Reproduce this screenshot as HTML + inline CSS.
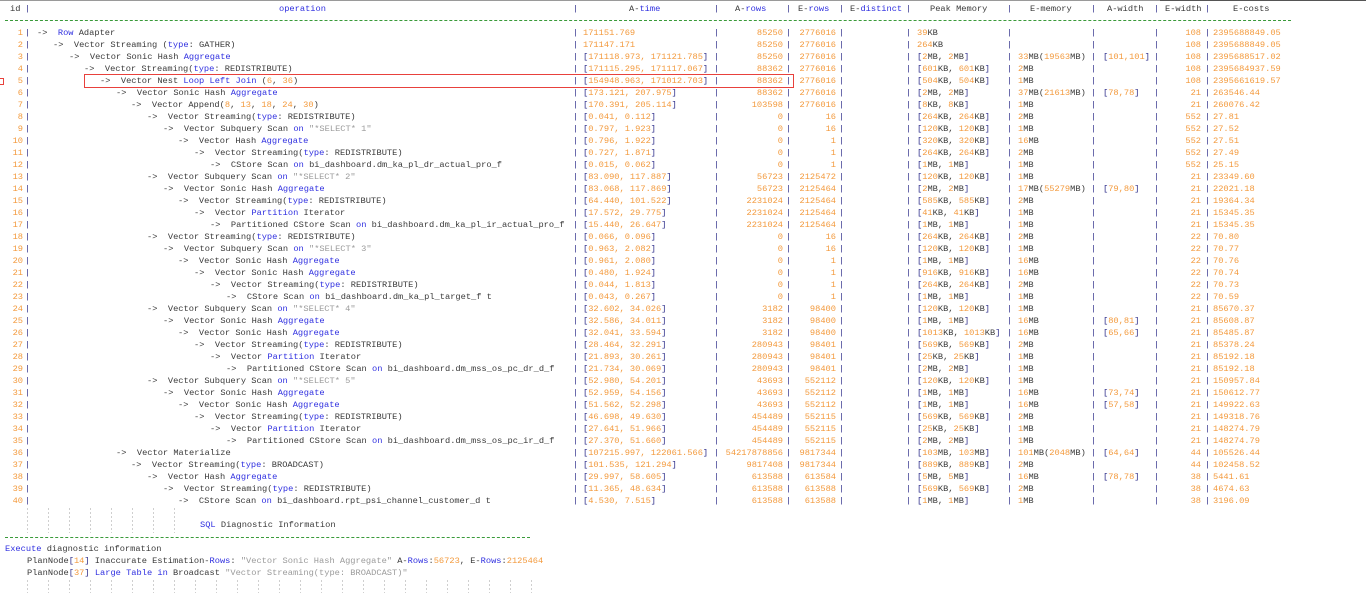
<!DOCTYPE html>
<html><head><meta charset="utf-8">
<style>
html,body{margin:0;padding:0;background:#fff;width:1366px;height:593px;overflow:hidden}
body{font-family:"Liberation Mono","DejaVu Sans Mono",monospace;font-size:8.7px;color:#3a3a3a;position:relative}
.r{position:absolute;left:0;width:1366px;height:12px;line-height:12px;white-space:pre}
.r span{white-space:pre}
.c{position:absolute;top:0}
.id{left:0;width:23px;text-align:right;color:#f39a3d}
.at{left:583px}
.ar{left:718px;width:65px;text-align:right}
.er{left:790px;width:46px;text-align:right}
.pm{left:917px}
.em{left:1018px}
.aw{left:1103px}
.ew{left:1160px;width:41px;text-align:right}
.ec{left:1213px}
.n{color:#f39a3d}
.k{color:#2f2fe0}
.s{color:#9b9b9b}
.b{color:#2e2e8a}
.bars{position:absolute;top:3px;margin:0;font:inherit;line-height:12px;color:#2e2e8a}
.h{position:absolute;top:3px;height:12px;line-height:12px;white-space:pre}
</style></head><body>
<div style="position:absolute;left:0;top:0;width:1366px;height:1px;background:#9a9a9a"></div>
<div style="position:absolute;left:1160px;top:0;width:206px;height:1px;background:#555"></div>

<!-- header -->
<div class="h" style="left:10px">id</div>
<div class="h k" style="left:279px">operation</div>
<div class="h" style="left:629px">A-<span class="k">time</span></div>
<div class="h" style="left:735px">A-<span class="k">rows</span></div>
<div class="h" style="left:798px">E-<span class="k">rows</span></div>
<div class="h" style="left:850px">E-<span class="k">distinct</span></div>
<div class="h" style="left:930px">Peak Memory</div>
<div class="h" style="left:1030px">E-memory</div>
<div class="h" style="left:1107px">A-width</div>
<div class="h" style="left:1165px">E-width</div>
<div class="h" style="left:1233px">E-costs</div>
<div style="position:absolute;left:5px;top:20px;width:1286px;height:0;border-top:1px dashed #3a9a3a"></div>

<!-- bars -->
<pre class="bars" style="left:25px">|

|
|
|
|
|
|
|
|
|
|
|
|
|
|
|
|
|
|
|
|
|
|
|
|
|
|
|
|
|
|
|
|
|
|
|
|
|
|
|
|</pre>
<pre class="bars" style="left:573px">|

|
|
|
|
|
|
|
|
|
|
|
|
|
|
|
|
|
|
|
|
|
|
|
|
|
|
|
|
|
|
|
|
|
|
|
|
|
|
|
|</pre>
<pre class="bars" style="left:714px">|

|
|
|
|
|
|
|
|
|
|
|
|
|
|
|
|
|
|
|
|
|
|
|
|
|
|
|
|
|
|
|
|
|
|
|
|
|
|
|
|</pre>
<pre class="bars" style="left:786px">|

|
|
|
|
|
|
|
|
|
|
|
|
|
|
|
|
|
|
|
|
|
|
|
|
|
|
|
|
|
|
|
|
|
|
|
|
|
|
|
|</pre>
<pre class="bars" style="left:839px">|

|
|
|
|
|
|
|
|
|
|
|
|
|
|
|
|
|
|
|
|
|
|
|
|
|
|
|
|
|
|
|
|
|
|
|
|
|
|
|
|</pre>
<pre class="bars" style="left:906px">|

|
|
|
|
|
|
|
|
|
|
|
|
|
|
|
|
|
|
|
|
|
|
|
|
|
|
|
|
|
|
|
|
|
|
|
|
|
|
|
|</pre>
<pre class="bars" style="left:1007px">|

|
|
|
|
|
|
|
|
|
|
|
|
|
|
|
|
|
|
|
|
|
|
|
|
|
|
|
|
|
|
|
|
|
|
|
|
|
|
|
|</pre>
<pre class="bars" style="left:1091px">|

|
|
|
|
|
|
|
|
|
|
|
|
|
|
|
|
|
|
|
|
|
|
|
|
|
|
|
|
|
|
|
|
|
|
|
|
|
|
|
|</pre>
<pre class="bars" style="left:1154px">|

|
|
|
|
|
|
|
|
|
|
|
|
|
|
|
|
|
|
|
|
|
|
|
|
|
|
|
|
|
|
|
|
|
|
|
|
|
|
|
|</pre>
<pre class="bars" style="left:1205px">|

|
|
|
|
|
|
|
|
|
|
|
|
|
|
|
|
|
|
|
|
|
|
|
|
|
|
|
|
|
|
|
|
|
|
|
|
|
|
|
|</pre>

<!-- rows -->
<div class="r" style="top:27px"><span class="c id">1</span><span class="c" style="left:37px">-&gt;  <span class="k">Row</span> Adapter</span><span class="c at n">171151.769</span><span class="c ar n">85250</span><span class="c er n">2776016</span><span class="c pm"><span class="n">39</span>KB</span><span class="c ew n">108</span><span class="c ec n">2395688849.05</span></div>
<div class="r" style="top:39px"><span class="c id">2</span><span class="c" style="left:53px">-&gt;  Vector Streaming (<span class="k">type</span>: GATHER)</span><span class="c at n">171147.171</span><span class="c ar n">85250</span><span class="c er n">2776016</span><span class="c pm"><span class="n">264</span>KB</span><span class="c ew n">108</span><span class="c ec n">2395688849.05</span></div>
<div class="r" style="top:51px"><span class="c id">3</span><span class="c" style="left:69px">-&gt;  Vector Sonic Hash <span class="k">Aggregate</span></span><span class="c at"><span class="b">[</span><span class="n">171118.973, 171121.785</span><span class="b">]</span></span><span class="c ar n">85250</span><span class="c er n">2776016</span><span class="c pm"><span class="b">[</span><span class="n">2</span>MB, <span class="n">2</span>MB<span class="b">]</span></span><span class="c em"><span class="n">33</span>MB(<span class="n">19563</span>MB)</span><span class="c aw b">[<span class="n">101,101</span>]</span><span class="c ew n">108</span><span class="c ec n">2395688517.02</span></div>
<div class="r" style="top:63px"><span class="c id">4</span><span class="c" style="left:84px">-&gt;  Vector Streaming(<span class="k">type</span>: REDISTRIBUTE)</span><span class="c at"><span class="b">[</span><span class="n">171115.295, 171117.067</span><span class="b">]</span></span><span class="c ar n">88362</span><span class="c er n">2776016</span><span class="c pm"><span class="b">[</span><span class="n">601</span>KB, <span class="n">601</span>KB<span class="b">]</span></span><span class="c em"><span class="n">2</span>MB</span><span class="c ew n">108</span><span class="c ec n">2395684937.59</span></div>
<div class="r" style="top:75px"><span class="c id">5</span><span class="c" style="left:100px">-&gt;  Vector Nest <span class="k">Loop Left Join</span> (<span class="n">6</span>, <span class="n">36</span>)</span><span class="c at"><span class="b">[</span><span class="n">154948.963, 171012.703</span><span class="b">]</span></span><span class="c ar n">88362</span><span class="c er n">2776016</span><span class="c pm"><span class="b">[</span><span class="n">504</span>KB, <span class="n">504</span>KB<span class="b">]</span></span><span class="c em"><span class="n">1</span>MB</span><span class="c ew n">108</span><span class="c ec n">2395661619.57</span></div>
<div class="r" style="top:87px"><span class="c id">6</span><span class="c" style="left:116px">-&gt;  Vector Sonic Hash <span class="k">Aggregate</span></span><span class="c at"><span class="b">[</span><span class="n">173.121, 207.975</span><span class="b">]</span></span><span class="c ar n">88362</span><span class="c er n">2776016</span><span class="c pm"><span class="b">[</span><span class="n">2</span>MB, <span class="n">2</span>MB<span class="b">]</span></span><span class="c em"><span class="n">37</span>MB(<span class="n">21613</span>MB)</span><span class="c aw b">[<span class="n">78,78</span>]</span><span class="c ew n">21</span><span class="c ec n">263546.44</span></div>
<div class="r" style="top:99px"><span class="c id">7</span><span class="c" style="left:131px">-&gt;  Vector Append(<span class="n">8</span>, <span class="n">13</span>, <span class="n">18</span>, <span class="n">24</span>, <span class="n">30</span>)</span><span class="c at"><span class="b">[</span><span class="n">170.391, 205.114</span><span class="b">]</span></span><span class="c ar n">103598</span><span class="c er n">2776016</span><span class="c pm"><span class="b">[</span><span class="n">8</span>KB, <span class="n">8</span>KB<span class="b">]</span></span><span class="c em"><span class="n">1</span>MB</span><span class="c ew n">21</span><span class="c ec n">260076.42</span></div>
<div class="r" style="top:111px"><span class="c id">8</span><span class="c" style="left:147px">-&gt;  Vector Streaming(<span class="k">type</span>: REDISTRIBUTE)</span><span class="c at"><span class="b">[</span><span class="n">0.041, 0.112</span><span class="b">]</span></span><span class="c ar n">0</span><span class="c er n">16</span><span class="c pm"><span class="b">[</span><span class="n">264</span>KB, <span class="n">264</span>KB<span class="b">]</span></span><span class="c em"><span class="n">2</span>MB</span><span class="c ew n">552</span><span class="c ec n">27.81</span></div>
<div class="r" style="top:123px"><span class="c id">9</span><span class="c" style="left:163px">-&gt;  Vector Subquery Scan <span class="k">on</span> <span class="s">"*SELECT* 1"</span></span><span class="c at"><span class="b">[</span><span class="n">0.797, 1.923</span><span class="b">]</span></span><span class="c ar n">0</span><span class="c er n">16</span><span class="c pm"><span class="b">[</span><span class="n">120</span>KB, <span class="n">120</span>KB<span class="b">]</span></span><span class="c em"><span class="n">1</span>MB</span><span class="c ew n">552</span><span class="c ec n">27.52</span></div>
<div class="r" style="top:135px"><span class="c id">10</span><span class="c" style="left:178px">-&gt;  Vector Hash <span class="k">Aggregate</span></span><span class="c at"><span class="b">[</span><span class="n">0.796, 1.922</span><span class="b">]</span></span><span class="c ar n">0</span><span class="c er n">1</span><span class="c pm"><span class="b">[</span><span class="n">320</span>KB, <span class="n">320</span>KB<span class="b">]</span></span><span class="c em"><span class="n">16</span>MB</span><span class="c ew n">552</span><span class="c ec n">27.51</span></div>
<div class="r" style="top:147px"><span class="c id">11</span><span class="c" style="left:194px">-&gt;  Vector Streaming(<span class="k">type</span>: REDISTRIBUTE)</span><span class="c at"><span class="b">[</span><span class="n">0.727, 1.871</span><span class="b">]</span></span><span class="c ar n">0</span><span class="c er n">1</span><span class="c pm"><span class="b">[</span><span class="n">264</span>KB, <span class="n">264</span>KB<span class="b">]</span></span><span class="c em"><span class="n">2</span>MB</span><span class="c ew n">552</span><span class="c ec n">27.49</span></div>
<div class="r" style="top:159px"><span class="c id">12</span><span class="c" style="left:210px">-&gt;  CStore Scan <span class="k">on</span> bi_dashboard.dm_ka_pl_dr_actual_pro_f</span><span class="c at"><span class="b">[</span><span class="n">0.015, 0.062</span><span class="b">]</span></span><span class="c ar n">0</span><span class="c er n">1</span><span class="c pm"><span class="b">[</span><span class="n">1</span>MB, <span class="n">1</span>MB<span class="b">]</span></span><span class="c em"><span class="n">1</span>MB</span><span class="c ew n">552</span><span class="c ec n">25.15</span></div>
<div class="r" style="top:171px"><span class="c id">13</span><span class="c" style="left:147px">-&gt;  Vector Subquery Scan <span class="k">on</span> <span class="s">"*SELECT* 2"</span></span><span class="c at"><span class="b">[</span><span class="n">83.090, 117.887</span><span class="b">]</span></span><span class="c ar n">56723</span><span class="c er n">2125472</span><span class="c pm"><span class="b">[</span><span class="n">120</span>KB, <span class="n">120</span>KB<span class="b">]</span></span><span class="c em"><span class="n">1</span>MB</span><span class="c ew n">21</span><span class="c ec n">23349.60</span></div>
<div class="r" style="top:183px"><span class="c id">14</span><span class="c" style="left:163px">-&gt;  Vector Sonic Hash <span class="k">Aggregate</span></span><span class="c at"><span class="b">[</span><span class="n">83.068, 117.869</span><span class="b">]</span></span><span class="c ar n">56723</span><span class="c er n">2125464</span><span class="c pm"><span class="b">[</span><span class="n">2</span>MB, <span class="n">2</span>MB<span class="b">]</span></span><span class="c em"><span class="n">17</span>MB(<span class="n">55279</span>MB)</span><span class="c aw b">[<span class="n">79,80</span>]</span><span class="c ew n">21</span><span class="c ec n">22021.18</span></div>
<div class="r" style="top:195px"><span class="c id">15</span><span class="c" style="left:178px">-&gt;  Vector Streaming(<span class="k">type</span>: REDISTRIBUTE)</span><span class="c at"><span class="b">[</span><span class="n">64.440, 101.522</span><span class="b">]</span></span><span class="c ar n">2231024</span><span class="c er n">2125464</span><span class="c pm"><span class="b">[</span><span class="n">585</span>KB, <span class="n">585</span>KB<span class="b">]</span></span><span class="c em"><span class="n">2</span>MB</span><span class="c ew n">21</span><span class="c ec n">19364.34</span></div>
<div class="r" style="top:207px"><span class="c id">16</span><span class="c" style="left:194px">-&gt;  Vector <span class="k">Partition</span> Iterator</span><span class="c at"><span class="b">[</span><span class="n">17.572, 29.775</span><span class="b">]</span></span><span class="c ar n">2231024</span><span class="c er n">2125464</span><span class="c pm"><span class="b">[</span><span class="n">41</span>KB, <span class="n">41</span>KB<span class="b">]</span></span><span class="c em"><span class="n">1</span>MB</span><span class="c ew n">21</span><span class="c ec n">15345.35</span></div>
<div class="r" style="top:219px"><span class="c id">17</span><span class="c" style="left:210px">-&gt;  Partitioned CStore Scan <span class="k">on</span> bi_dashboard.dm_ka_pl_ir_actual_pro_f</span><span class="c at"><span class="b">[</span><span class="n">15.440, 26.647</span><span class="b">]</span></span><span class="c ar n">2231024</span><span class="c er n">2125464</span><span class="c pm"><span class="b">[</span><span class="n">1</span>MB, <span class="n">1</span>MB<span class="b">]</span></span><span class="c em"><span class="n">1</span>MB</span><span class="c ew n">21</span><span class="c ec n">15345.35</span></div>
<div class="r" style="top:231px"><span class="c id">18</span><span class="c" style="left:147px">-&gt;  Vector Streaming(<span class="k">type</span>: REDISTRIBUTE)</span><span class="c at"><span class="b">[</span><span class="n">0.066, 0.096</span><span class="b">]</span></span><span class="c ar n">0</span><span class="c er n">16</span><span class="c pm"><span class="b">[</span><span class="n">264</span>KB, <span class="n">264</span>KB<span class="b">]</span></span><span class="c em"><span class="n">2</span>MB</span><span class="c ew n">22</span><span class="c ec n">70.80</span></div>
<div class="r" style="top:243px"><span class="c id">19</span><span class="c" style="left:163px">-&gt;  Vector Subquery Scan <span class="k">on</span> <span class="s">"*SELECT* 3"</span></span><span class="c at"><span class="b">[</span><span class="n">0.963, 2.082</span><span class="b">]</span></span><span class="c ar n">0</span><span class="c er n">16</span><span class="c pm"><span class="b">[</span><span class="n">120</span>KB, <span class="n">120</span>KB<span class="b">]</span></span><span class="c em"><span class="n">1</span>MB</span><span class="c ew n">22</span><span class="c ec n">70.77</span></div>
<div class="r" style="top:255px"><span class="c id">20</span><span class="c" style="left:178px">-&gt;  Vector Sonic Hash <span class="k">Aggregate</span></span><span class="c at"><span class="b">[</span><span class="n">0.961, 2.080</span><span class="b">]</span></span><span class="c ar n">0</span><span class="c er n">1</span><span class="c pm"><span class="b">[</span><span class="n">1</span>MB, <span class="n">1</span>MB<span class="b">]</span></span><span class="c em"><span class="n">16</span>MB</span><span class="c ew n">22</span><span class="c ec n">70.76</span></div>
<div class="r" style="top:267px"><span class="c id">21</span><span class="c" style="left:194px">-&gt;  Vector Sonic Hash <span class="k">Aggregate</span></span><span class="c at"><span class="b">[</span><span class="n">0.480, 1.924</span><span class="b">]</span></span><span class="c ar n">0</span><span class="c er n">1</span><span class="c pm"><span class="b">[</span><span class="n">916</span>KB, <span class="n">916</span>KB<span class="b">]</span></span><span class="c em"><span class="n">16</span>MB</span><span class="c ew n">22</span><span class="c ec n">70.74</span></div>
<div class="r" style="top:279px"><span class="c id">22</span><span class="c" style="left:210px">-&gt;  Vector Streaming(<span class="k">type</span>: REDISTRIBUTE)</span><span class="c at"><span class="b">[</span><span class="n">0.044, 1.813</span><span class="b">]</span></span><span class="c ar n">0</span><span class="c er n">1</span><span class="c pm"><span class="b">[</span><span class="n">264</span>KB, <span class="n">264</span>KB<span class="b">]</span></span><span class="c em"><span class="n">2</span>MB</span><span class="c ew n">22</span><span class="c ec n">70.73</span></div>
<div class="r" style="top:291px"><span class="c id">23</span><span class="c" style="left:226px">-&gt;  CStore Scan <span class="k">on</span> bi_dashboard.dm_ka_pl_target_f t</span><span class="c at"><span class="b">[</span><span class="n">0.043, 0.267</span><span class="b">]</span></span><span class="c ar n">0</span><span class="c er n">1</span><span class="c pm"><span class="b">[</span><span class="n">1</span>MB, <span class="n">1</span>MB<span class="b">]</span></span><span class="c em"><span class="n">1</span>MB</span><span class="c ew n">22</span><span class="c ec n">70.59</span></div>
<div class="r" style="top:303px"><span class="c id">24</span><span class="c" style="left:147px">-&gt;  Vector Subquery Scan <span class="k">on</span> <span class="s">"*SELECT* 4"</span></span><span class="c at"><span class="b">[</span><span class="n">32.602, 34.026</span><span class="b">]</span></span><span class="c ar n">3182</span><span class="c er n">98400</span><span class="c pm"><span class="b">[</span><span class="n">120</span>KB, <span class="n">120</span>KB<span class="b">]</span></span><span class="c em"><span class="n">1</span>MB</span><span class="c ew n">21</span><span class="c ec n">85670.37</span></div>
<div class="r" style="top:315px"><span class="c id">25</span><span class="c" style="left:163px">-&gt;  Vector Sonic Hash <span class="k">Aggregate</span></span><span class="c at"><span class="b">[</span><span class="n">32.586, 34.011</span><span class="b">]</span></span><span class="c ar n">3182</span><span class="c er n">98400</span><span class="c pm"><span class="b">[</span><span class="n">1</span>MB, <span class="n">1</span>MB<span class="b">]</span></span><span class="c em"><span class="n">16</span>MB</span><span class="c aw b">[<span class="n">80,81</span>]</span><span class="c ew n">21</span><span class="c ec n">85608.87</span></div>
<div class="r" style="top:327px"><span class="c id">26</span><span class="c" style="left:178px">-&gt;  Vector Sonic Hash <span class="k">Aggregate</span></span><span class="c at"><span class="b">[</span><span class="n">32.041, 33.594</span><span class="b">]</span></span><span class="c ar n">3182</span><span class="c er n">98400</span><span class="c pm"><span class="b">[</span><span class="n">1013</span>KB, <span class="n">1013</span>KB<span class="b">]</span></span><span class="c em"><span class="n">16</span>MB</span><span class="c aw b">[<span class="n">65,66</span>]</span><span class="c ew n">21</span><span class="c ec n">85485.87</span></div>
<div class="r" style="top:339px"><span class="c id">27</span><span class="c" style="left:194px">-&gt;  Vector Streaming(<span class="k">type</span>: REDISTRIBUTE)</span><span class="c at"><span class="b">[</span><span class="n">28.464, 32.291</span><span class="b">]</span></span><span class="c ar n">280943</span><span class="c er n">98401</span><span class="c pm"><span class="b">[</span><span class="n">569</span>KB, <span class="n">569</span>KB<span class="b">]</span></span><span class="c em"><span class="n">2</span>MB</span><span class="c ew n">21</span><span class="c ec n">85378.24</span></div>
<div class="r" style="top:351px"><span class="c id">28</span><span class="c" style="left:210px">-&gt;  Vector <span class="k">Partition</span> Iterator</span><span class="c at"><span class="b">[</span><span class="n">21.893, 30.261</span><span class="b">]</span></span><span class="c ar n">280943</span><span class="c er n">98401</span><span class="c pm"><span class="b">[</span><span class="n">25</span>KB, <span class="n">25</span>KB<span class="b">]</span></span><span class="c em"><span class="n">1</span>MB</span><span class="c ew n">21</span><span class="c ec n">85192.18</span></div>
<div class="r" style="top:363px"><span class="c id">29</span><span class="c" style="left:226px">-&gt;  Partitioned CStore Scan <span class="k">on</span> bi_dashboard.dm_mss_os_pc_dr_d_f</span><span class="c at"><span class="b">[</span><span class="n">21.734, 30.069</span><span class="b">]</span></span><span class="c ar n">280943</span><span class="c er n">98401</span><span class="c pm"><span class="b">[</span><span class="n">2</span>MB, <span class="n">2</span>MB<span class="b">]</span></span><span class="c em"><span class="n">1</span>MB</span><span class="c ew n">21</span><span class="c ec n">85192.18</span></div>
<div class="r" style="top:375px"><span class="c id">30</span><span class="c" style="left:147px">-&gt;  Vector Subquery Scan <span class="k">on</span> <span class="s">"*SELECT* 5"</span></span><span class="c at"><span class="b">[</span><span class="n">52.980, 54.201</span><span class="b">]</span></span><span class="c ar n">43693</span><span class="c er n">552112</span><span class="c pm"><span class="b">[</span><span class="n">120</span>KB, <span class="n">120</span>KB<span class="b">]</span></span><span class="c em"><span class="n">1</span>MB</span><span class="c ew n">21</span><span class="c ec n">150957.84</span></div>
<div class="r" style="top:387px"><span class="c id">31</span><span class="c" style="left:163px">-&gt;  Vector Sonic Hash <span class="k">Aggregate</span></span><span class="c at"><span class="b">[</span><span class="n">52.959, 54.156</span><span class="b">]</span></span><span class="c ar n">43693</span><span class="c er n">552112</span><span class="c pm"><span class="b">[</span><span class="n">1</span>MB, <span class="n">1</span>MB<span class="b">]</span></span><span class="c em"><span class="n">16</span>MB</span><span class="c aw b">[<span class="n">73,74</span>]</span><span class="c ew n">21</span><span class="c ec n">150612.77</span></div>
<div class="r" style="top:399px"><span class="c id">32</span><span class="c" style="left:178px">-&gt;  Vector Sonic Hash <span class="k">Aggregate</span></span><span class="c at"><span class="b">[</span><span class="n">51.562, 52.298</span><span class="b">]</span></span><span class="c ar n">43693</span><span class="c er n">552112</span><span class="c pm"><span class="b">[</span><span class="n">1</span>MB, <span class="n">1</span>MB<span class="b">]</span></span><span class="c em"><span class="n">16</span>MB</span><span class="c aw b">[<span class="n">57,58</span>]</span><span class="c ew n">21</span><span class="c ec n">149922.63</span></div>
<div class="r" style="top:411px"><span class="c id">33</span><span class="c" style="left:194px">-&gt;  Vector Streaming(<span class="k">type</span>: REDISTRIBUTE)</span><span class="c at"><span class="b">[</span><span class="n">46.698, 49.630</span><span class="b">]</span></span><span class="c ar n">454489</span><span class="c er n">552115</span><span class="c pm"><span class="b">[</span><span class="n">569</span>KB, <span class="n">569</span>KB<span class="b">]</span></span><span class="c em"><span class="n">2</span>MB</span><span class="c ew n">21</span><span class="c ec n">149318.76</span></div>
<div class="r" style="top:423px"><span class="c id">34</span><span class="c" style="left:210px">-&gt;  Vector <span class="k">Partition</span> Iterator</span><span class="c at"><span class="b">[</span><span class="n">27.641, 51.966</span><span class="b">]</span></span><span class="c ar n">454489</span><span class="c er n">552115</span><span class="c pm"><span class="b">[</span><span class="n">25</span>KB, <span class="n">25</span>KB<span class="b">]</span></span><span class="c em"><span class="n">1</span>MB</span><span class="c ew n">21</span><span class="c ec n">148274.79</span></div>
<div class="r" style="top:435px"><span class="c id">35</span><span class="c" style="left:226px">-&gt;  Partitioned CStore Scan <span class="k">on</span> bi_dashboard.dm_mss_os_pc_ir_d_f</span><span class="c at"><span class="b">[</span><span class="n">27.370, 51.660</span><span class="b">]</span></span><span class="c ar n">454489</span><span class="c er n">552115</span><span class="c pm"><span class="b">[</span><span class="n">2</span>MB, <span class="n">2</span>MB<span class="b">]</span></span><span class="c em"><span class="n">1</span>MB</span><span class="c ew n">21</span><span class="c ec n">148274.79</span></div>
<div class="r" style="top:447px"><span class="c id">36</span><span class="c" style="left:116px">-&gt;  Vector Materialize</span><span class="c at"><span class="b">[</span><span class="n">107215.997, 122061.566</span><span class="b">]</span></span><span class="c ar n">54217878856</span><span class="c er n">9817344</span><span class="c pm"><span class="b">[</span><span class="n">103</span>MB, <span class="n">103</span>MB<span class="b">]</span></span><span class="c em"><span class="n">101</span>MB(<span class="n">2048</span>MB)</span><span class="c aw b">[<span class="n">64,64</span>]</span><span class="c ew n">44</span><span class="c ec n">105526.44</span></div>
<div class="r" style="top:459px"><span class="c id">37</span><span class="c" style="left:131px">-&gt;  Vector Streaming(<span class="k">type</span>: BROADCAST)</span><span class="c at"><span class="b">[</span><span class="n">101.535, 121.294</span><span class="b">]</span></span><span class="c ar n">9817408</span><span class="c er n">9817344</span><span class="c pm"><span class="b">[</span><span class="n">889</span>KB, <span class="n">889</span>KB<span class="b">]</span></span><span class="c em"><span class="n">2</span>MB</span><span class="c ew n">44</span><span class="c ec n">102458.52</span></div>
<div class="r" style="top:471px"><span class="c id">38</span><span class="c" style="left:147px">-&gt;  Vector Hash <span class="k">Aggregate</span></span><span class="c at"><span class="b">[</span><span class="n">29.997, 58.605</span><span class="b">]</span></span><span class="c ar n">613588</span><span class="c er n">613584</span><span class="c pm"><span class="b">[</span><span class="n">5</span>MB, <span class="n">5</span>MB<span class="b">]</span></span><span class="c em"><span class="n">16</span>MB</span><span class="c aw b">[<span class="n">78,78</span>]</span><span class="c ew n">38</span><span class="c ec n">5441.61</span></div>
<div class="r" style="top:483px"><span class="c id">39</span><span class="c" style="left:163px">-&gt;  Vector Streaming(<span class="k">type</span>: REDISTRIBUTE)</span><span class="c at"><span class="b">[</span><span class="n">11.365, 48.634</span><span class="b">]</span></span><span class="c ar n">613588</span><span class="c er n">613588</span><span class="c pm"><span class="b">[</span><span class="n">569</span>KB, <span class="n">569</span>KB<span class="b">]</span></span><span class="c em"><span class="n">2</span>MB</span><span class="c ew n">38</span><span class="c ec n">4674.63</span></div>
<div class="r" style="top:495px"><span class="c id">40</span><span class="c" style="left:178px">-&gt;  CStore Scan <span class="k">on</span> bi_dashboard.rpt_psi_channel_customer_d t</span><span class="c at"><span class="b">[</span><span class="n">4.530, 7.515</span><span class="b">]</span></span><span class="c ar n">613588</span><span class="c er n">613588</span><span class="c pm"><span class="b">[</span><span class="n">1</span>MB, <span class="n">1</span>MB<span class="b">]</span></span><span class="c em"><span class="n">1</span>MB</span><span class="c ew n">38</span><span class="c ec n">3196.09</span></div>

<!-- red highlight -->
<div style="position:absolute;left:84px;top:74px;width:708px;height:12px;border:1px solid #e8413c"></div>
<div style="position:absolute;left:0;top:78px;width:3px;height:5px;border:1px solid #e8413c;border-left:none"></div>

<!-- dotted guides -->
<div style="position:absolute;left:27px;top:508px;width:155px;height:25px;background:repeating-linear-gradient(90deg,#cfcfcf 0 1px,transparent 1px 21px);-webkit-mask:repeating-linear-gradient(180deg,#000 0 2px,transparent 2px 4px);mask:repeating-linear-gradient(180deg,#000 0 2px,transparent 2px 4px)"></div>
<div style="position:absolute;left:27px;top:580px;width:520px;height:13px;background:repeating-linear-gradient(90deg,#cfcfcf 0 1px,transparent 1px 21px);-webkit-mask:repeating-linear-gradient(180deg,#000 0 2px,transparent 2px 4px);mask:repeating-linear-gradient(180deg,#000 0 2px,transparent 2px 4px)"></div>

<!-- diagnostics -->
<div class="r" style="top:519px;left:200px;width:auto"><span class="k">SQL</span> Diagnostic Information</div>
<div style="position:absolute;left:5px;top:537px;width:525px;height:0;border-top:1px dashed #3a9a3a"></div>
<div class="r" style="top:543px;left:5px;width:auto"><span class="k">Execute</span> diagnostic information</div>
<div class="r" style="top:555px;left:27px;width:auto">PlanNode<span class="b">[</span><span class="n">14</span><span class="b">]</span> Inaccurate Estimation-<span class="k">Rows</span>: <span class="s">"Vector Sonic Hash Aggregate"</span> A-<span class="k">Rows</span>:<span class="n">56723</span>, E-<span class="k">Rows</span>:<span class="n">2125464</span></div>
<div class="r" style="top:567px;left:27px;width:auto">PlanNode<span class="b">[</span><span class="n">37</span><span class="b">]</span> <span class="k">Large Table in</span> Broadcast <span class="s">"Vector Streaming(type: BROADCAST)"</span></div>
</body></html>
